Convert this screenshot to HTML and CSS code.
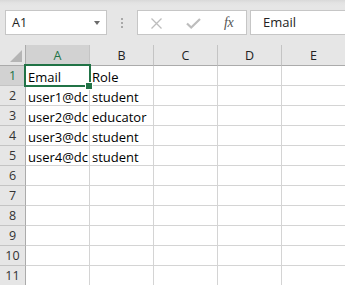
FILE: index.html
```html
<!DOCTYPE html>
<html>
<head>
<meta charset="utf-8">
<link rel="stylesheet" href="styles.css">
</head>
<body>
<div class="app">
  <div class="toolbar">
    <div class="namebox">
      <span class="nb-text">A1</span>
      <span class="nb-arrow"></span>
    </div>
    <div class="dots"><i></i><i></i><i></i></div>
    <div class="fxbox">
      <svg class="ic-x" width="13" height="11" viewBox="0 0 13 11"><path d="M1.5 0.5 L11.5 10.5 M11.5 0.5 L1.5 10.5" stroke="#bdbdbd" stroke-width="1.3" fill="none"/></svg>
      <svg class="ic-check" width="15" height="11" viewBox="0 0 15 11"><path d="M1 5.5 L5.2 9.5 L14 1" stroke="#bdbdbd" stroke-width="2.2" fill="none"/></svg>
      <span class="fx">fx</span>
    </div>
    <div class="formula">Email</div>
  </div>
  <div class="sheet">
    <div class="grid">
      <div class="corner"><span class="tri"></span></div>
      <div class="ch sel">A</div>
      <div class="ch">B</div>
      <div class="ch">C</div>
      <div class="ch">D</div>
      <div class="ch">E</div>

      <div class="rh sel">1</div><div class="c">Email</div><div class="c">Role</div><div class="c"></div><div class="c"></div><div class="c"></div>
      <div class="rh">2</div><div class="c">user1@dc</div><div class="c">student</div><div class="c"></div><div class="c"></div><div class="c"></div>
      <div class="rh">3</div><div class="c">user2@dc</div><div class="c">educator</div><div class="c"></div><div class="c"></div><div class="c"></div>
      <div class="rh">4</div><div class="c">user3@dc</div><div class="c">student</div><div class="c"></div><div class="c"></div><div class="c"></div>
      <div class="rh">5</div><div class="c">user4@dc</div><div class="c">student</div><div class="c"></div><div class="c"></div><div class="c"></div>
      <div class="rh">6</div><div class="c"></div><div class="c"></div><div class="c"></div><div class="c"></div><div class="c"></div>
      <div class="rh">7</div><div class="c"></div><div class="c"></div><div class="c"></div><div class="c"></div><div class="c"></div>
      <div class="rh">8</div><div class="c"></div><div class="c"></div><div class="c"></div><div class="c"></div><div class="c"></div>
      <div class="rh">9</div><div class="c"></div><div class="c"></div><div class="c"></div><div class="c"></div><div class="c"></div>
      <div class="rh">10</div><div class="c"></div><div class="c"></div><div class="c"></div><div class="c"></div><div class="c"></div>
      <div class="rh">11</div><div class="c"></div><div class="c"></div><div class="c"></div><div class="c"></div><div class="c"></div>
    </div>
    <div class="selbox"></div>
    <div class="handle"></div>
  </div>
</div>
</body>
</html>
```
FILE: styles.css
```css
html, body {
  margin: 0;
  padding: 0;
  background: #ffffff;
}
.app {
  width: 345px;
  height: 285px;
  overflow: hidden;
  font-family: "Open Sans", "Noto Sans", sans-serif;
}
.toolbar {
  height: 45px;
  box-sizing: border-box;
  padding-top: 10px;
  display: flex;
  align-items: flex-start;
  background: linear-gradient(#d9d9d9 0px, #e3e3e3 3px, #e6e6e6 6px, #e6e6e6 100%);
}
.namebox {
  margin-left: 5px;
  width: 102px;
  height: 25px;
  box-sizing: border-box;
  border: 1px solid #c6c6c6;
  background: #fff;
  display: flex;
  align-items: center;
  justify-content: space-between;
  padding: 0 6px 0 6px;
}
.nb-text {
  font-size: 12.5px;
  color: #222;
  line-height: 1;
  margin-top: 1px;
}
.nb-arrow {
  width: 0;
  height: 0;
  border-left: 3.5px solid transparent;
  border-right: 3.5px solid transparent;
  border-top: 4px solid #6b6b6b;
  margin-top: 1px;
}
.dots {
  width: 30px;
  height: 25px;
  display: flex;
  flex-direction: column;
  align-items: center;
  justify-content: center;
  gap: 2px;
}
.dots i {
  display: block;
  width: 2px;
  height: 2px;
  background: #a8a8a8;
}
.fxbox {
  width: 110px;
  height: 25px;
  box-sizing: border-box;
  border: 1px solid #c6c6c6;
  background: #fff;
  display: flex;
  align-items: center;
  padding-left: 12px;
}
.ic-x {
  display: block;
  margin-top: 1px;
}
.ic-check {
  display: block;
  margin-left: 23px;
  margin-top: 1px;
}
.fx {
  font-family: "Liberation Serif", "DejaVu Serif", serif;
  font-style: italic;
  font-size: 14px;
  color: #555;
  margin-left: 23px;
  letter-spacing: -0.5px;
  line-height: 1;
}
.formula {
  margin-left: 3px;
  flex: 1;
  height: 25px;
  box-sizing: border-box;
  border: 1px solid #c6c6c6;
  border-right: none;
  background: #fff;
  font-size: 13px;
  color: #222;
  padding-left: 12px;
  line-height: 23px;
}
.sheet {
  position: relative;
}
.grid {
  display: grid;
  grid-template-columns: 26px repeat(5, 64px);
  grid-template-rows: 21px repeat(11, 20px);
}
.grid > div {
  box-sizing: border-box;
  overflow: hidden;
  white-space: nowrap;
}
.corner {
  background: #e6e6e6;
  border-right: 1px solid #ababab;
  border-bottom: 1px solid #ababab;
  position: relative;
}
.tri {
  position: absolute;
  right: 3px;
  bottom: 3px;
  width: 0;
  height: 0;
  border-left: 12px solid transparent;
  border-bottom: 12px solid #b5b5b5;
}
.ch {
  background: #e6e6e6;
  border-right: 1px solid #c4c4c4;
  border-bottom: 1px solid #ababab;
  text-align: center;
  font-size: 12.5px;
  line-height: 21px;
  color: #222;
}
.ch.sel {
  background: #d2d2d2;
  color: #217346;
}
.rh {
  background: #e6e6e6;
  border-right: 1px solid #ababab;
  border-bottom: 1px solid #c4c4c4;
  text-align: center;
  font-size: 12.5px;
  line-height: 20px;
  color: #333;
}
.rh.sel {
  background: #d2d2d2;
  color: #217346;
}
.c {
  border-right: 1px solid #d4d4d4;
  border-bottom: 1px solid #d4d4d4;
  font-size: 13px;
  line-height: 22px;
  padding-left: 2px;
  color: #000;
}
.selbox {
  position: absolute;
  left: 24px;
  top: 19px;
  width: 67px;
  height: 23px;
  box-sizing: border-box;
  border: 2px solid #217346;
}
.handle {
  position: absolute;
  left: 85px;
  top: 37px;
  width: 6px;
  height: 6px;
  background: #217346;
  border: 1px solid #fff;
}
```
